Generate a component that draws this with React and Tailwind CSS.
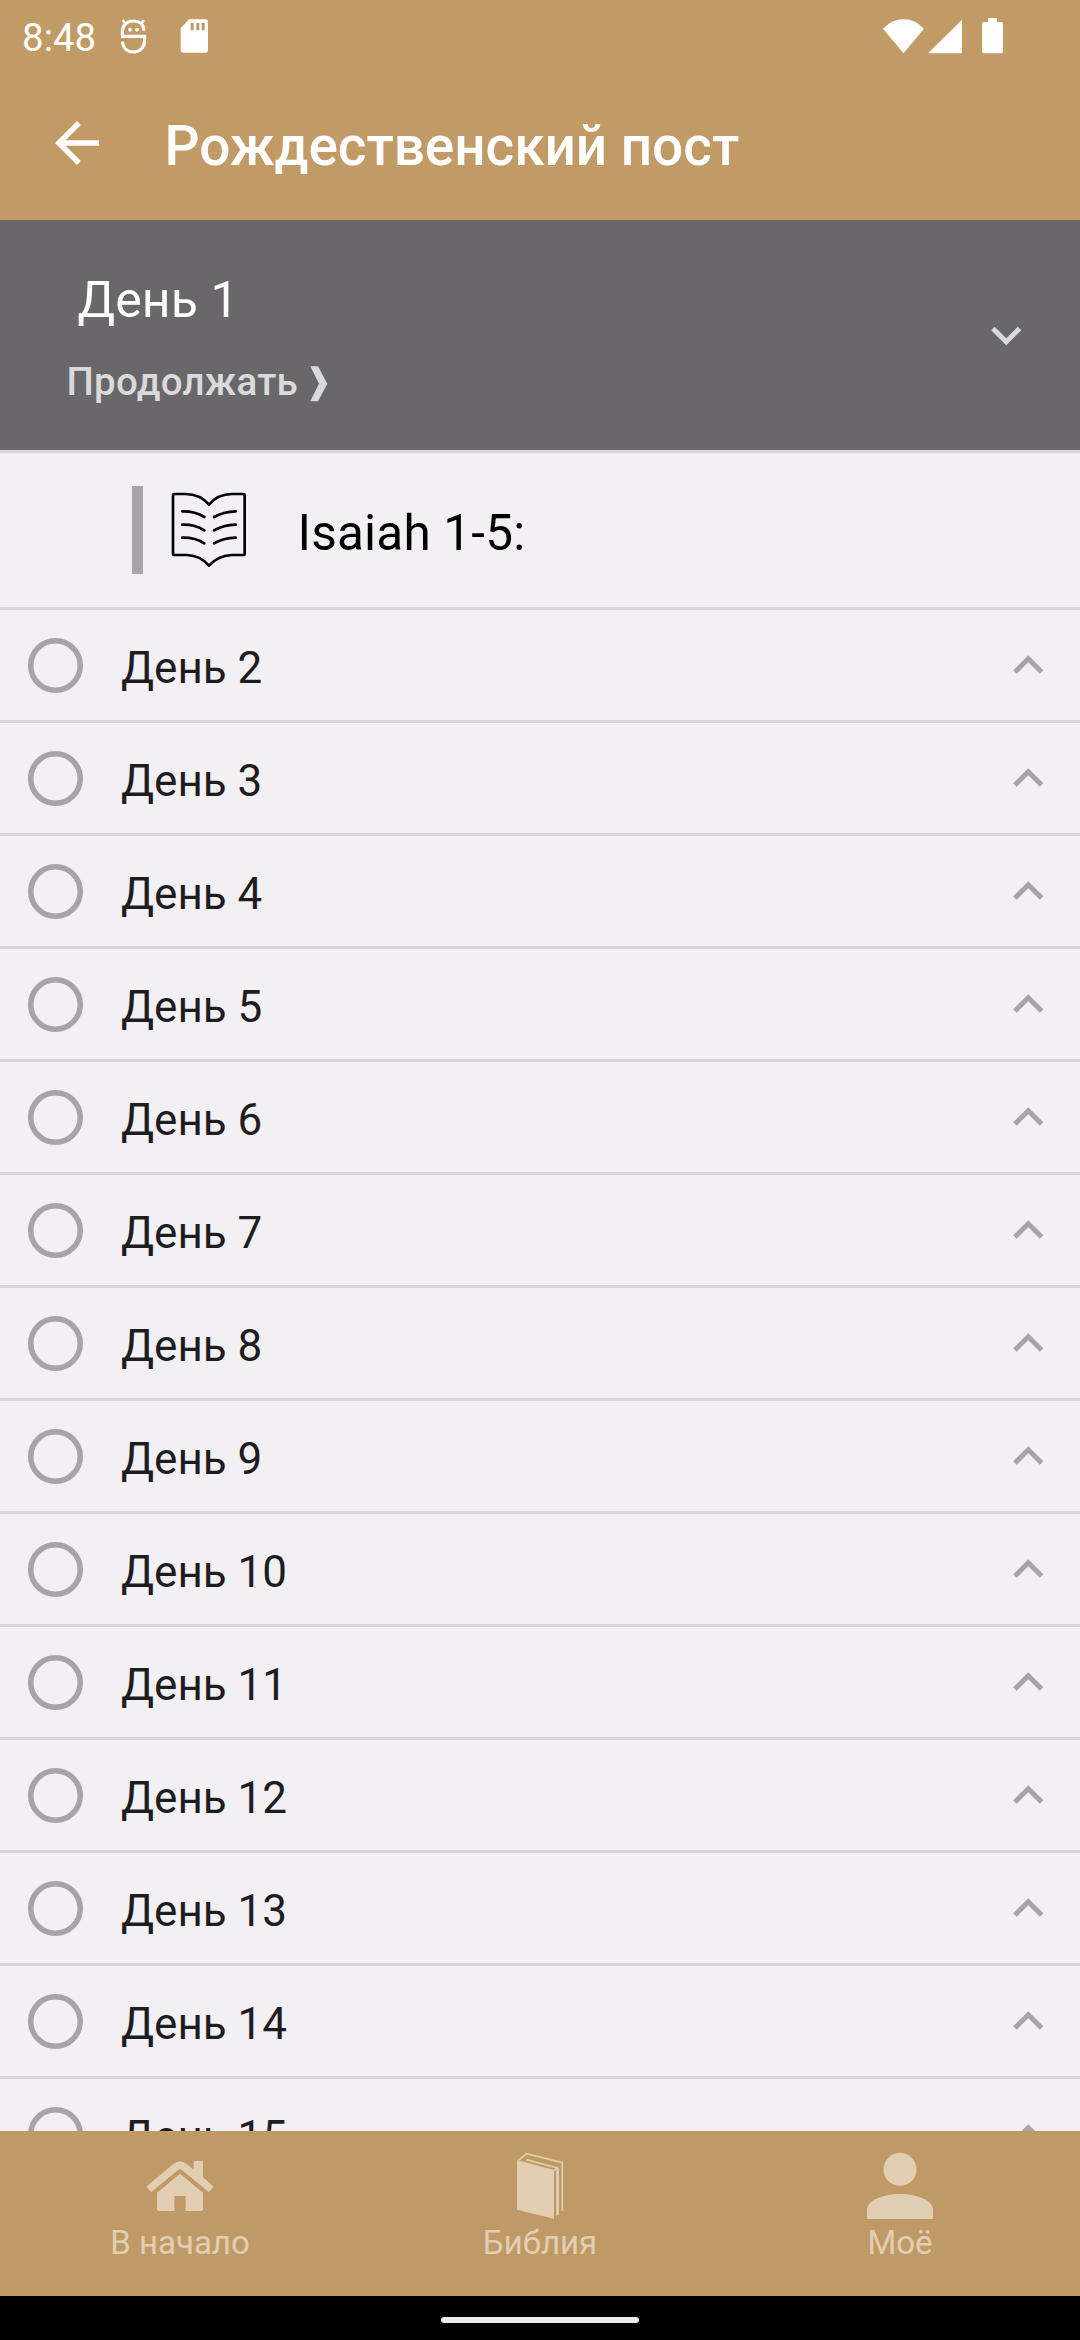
const days = [2, 3, 4, 5, 6, 7, 8, 9, 10, 11, 12, 13, 14, 15];

function StatusBar() {
  return (
    <div className="flex h-[72px] shrink-0 items-center pr-[77px] pl-[22px] text-white">
      <span className="mt-[3px] w-[98px] text-[38.500px] leading-[46px] whitespace-nowrap">8:48</span>
      <svg className="h-9 w-[27px]" viewBox="0 0 81 108" fill="none" stroke="currentColor">
        <path d="M7 55V39C9 21 22 9 40 9s31 10 32 29M3 55h71v11c0 22-14 36-34 36S9 88 7 71" strokeWidth="9.500" />
        <path d="M16 17 10 9M64 17l6-8" strokeWidth="8" strokeLinecap="round" />
        <circle cx="30" cy="35" r="5.500" fill="currentColor" stroke="none" />
        <circle cx="51" cy="35" r="5.500" fill="currentColor" stroke="none" />
      </svg>
      <svg className="ml-[33px] h-9 w-7" viewBox="0 0 84 108" fill="currentColor">
        <path fillRule="evenodd" d="M27 4h49q8 0 8 8v84q0 8-8 8H10q-8 0-8-8V31zM32 15v22h9V15zM49 15v22h9V15zM65 15v22h9V15z" />
      </svg>
      <div className="grow" />
      <svg className="h-9 w-[41px]" viewBox="0 0 123 108" fill="currentColor">
        <path d="M0 32Q27 4 61.500 4T123 32L61.500 106z" />
      </svg>
      <svg className="ml-1 h-9 w-[34px]" viewBox="0 0 102 108" fill="currentColor">
        <path d="M102 5v101H0z" />
      </svg>
      <svg className="ml-5 h-9 w-[21px]" viewBox="0 0 63 108" fill="currentColor">
        <path d="M18 0h27v12h12q6 0 6 6v82q0 6-6 6H6q-6 0-6-6V18q0-6 6-6h12z" />
      </svg>
    </div>
  );
}

function AppBar() {
  return (
    <div className="flex h-[148px] shrink-0 items-center text-white">
      <svg className="mb-[6px] ml-[44px] h-[66px] w-[66px]" viewBox="0 0 24 24" fill="currentColor">
        <path d="M20 11H7.830l5.590-5.590L12 4l-8 8 8 8 1.410-1.410L7.830 13H20z" />
      </svg>
      <h1 className="ml-[54.500px] text-[55px] leading-[64px] font-medium tracking-[-0.080px] whitespace-nowrap">Рождественский пост</h1>
    </div>
  );
}

function CurrentDay() {
  return (
    <section className="flex h-[233px] shrink-0 items-center border-b-[3px] border-[#d6d5d8] bg-[#696769] pr-[44px]">
      <div className="flex grow flex-col self-start pt-[51px]">
        <h2 className="ml-[77.500px] text-[50px] leading-[58px] tracking-[0.100px] text-white">День 1</h2>
        <div className="mt-[30px] ml-[66.500px] flex items-center text-[38.500px] leading-[46px] font-medium text-[#dad9db]">
          <span className="tracking-[0.250px]">Продолжать</span>
          <svg className="mt-[3px] ml-[12px] h-9 w-[18px]" viewBox="0 0 54 108" fill="currentColor">
            <path d="M1 1h23l28 52-28 53H1l26-53z" />
          </svg>
        </div>
      </div>
      <svg className="h-[60.500px] w-[60.500px] text-[#dad9db]" viewBox="0 0 24 24" fill="currentColor">
        <path d="M16.590 8.590 12 13.170 7.410 8.590 6 10l6 6 6-6z" />
      </svg>
    </section>
  );
}

function Reading() {
  return (
    <section className="flex h-[157px] shrink-0 items-center border-b-[3px] border-[#d6d5d8] pl-[132px] text-black">
      <div className="h-[88px] w-[11px] bg-[#a6a4a6]" />
      <svg className="ml-[27px] h-20 w-20" viewBox="210 150 240 240" fill="none" stroke="currentColor" strokeWidth="8" strokeLinecap="round" strokeLinejoin="round">
        <path d="M327 194Q300 162 257 162H223q-4 0-4 4V341q0 4 4 4h38Q302 347 327 377 354 347 394 345h36q4 0 4-4V166q0-4-4-4h-34Q353 162 327 194z" />
        <path d="M247 214q37-1 66 17M247 254q37-1 66 17M247 293q37-1 66 17M407 214q-37 1-65 17M407 254q-37 1-65 17M407 293q-37 1-65 17" />
      </svg>
      <span className="mt-[6px] ml-[47.500px] text-[49.500px] leading-[58px] tracking-[0.200px] whitespace-nowrap">Isaiah 1-5:</span>
    </section>
  );
}

function DayRow({ day }) {
  return (
    <li className="flex h-[113px] shrink-0 items-center border-b-[3px] border-[#d6d5d8] pr-[22px] pl-[27.500px]">
      <svg className="h-[55px] w-[55px] text-[#a6a4a6]" viewBox="0 0 55 55" fill="none" stroke="currentColor" strokeWidth="5.500">
        <circle cx="27.500" cy="27.500" r="24.750" />
      </svg>
      <span className="mt-[6px] ml-[38.500px] grow text-[44px] leading-[52px] text-[#1d1c1f]">День {day}</span>
      <svg className="h-[60.500px] w-[60.500px] text-[#a6a4a6]" viewBox="0 0 24 24" fill="currentColor">
        <path d="m12 8-6 6 1.410 1.410L12 10.830l4.590 4.580L18 14z" />
      </svg>
    </li>
  );
}

function NavItem({ label, viewBox, children }) {
  return (
    <div className="flex flex-col items-center pt-[19px]">
      <svg className="h-[72px] w-[72px]" viewBox={viewBox} fill="currentColor">{children}</svg>
      <span className="mt-[2px] text-[33px] leading-[38px]">{label}</span>
    </div>
  );
}

function BottomNav() {
  return (
    <nav className="grid h-[165px] shrink-0 grid-cols-3 bg-[#c09a66] text-[#e2ceb3]">
      <NavItem label="В начало" viewBox="252 270 216 216">
        <path d="M262 377 341 311q19-15 38 0l22 18V303h28v49l29 25q3 3 0 6l-9 11q-3 3-6 0L366 330q-6-5-12 0l-77 64q-3 3-6 0l-9-11q-3-3 0-6z" />
        <path d="M360 341 429 398v49q0 6-6 6H377V408H343v45H297q-6 0-6-6V398z" />
      </NavItem>
      <NavItem label="Библия" viewBox="252 150 216 216">
        <path d="M291 180 402 210V356L291 329z" />
        <path d="M294 182 320 161 427 188V333M402 212l10-8V345M412 204 319 179" fill="none" stroke="currentColor" strokeWidth="5" />
        <path d="M409 204h8V343l-8 4z" />
      </NavItem>
      <NavItem label="Моё" viewBox="192 270 216 216">
        <circle cx="300" cy="328" r="49.500" />
        <path d="M201 477V449C201 420 252 402 300 402s99 18 99 47v28z" />
      </NavItem>
    </nav>
  );
}

export default function App() {
  return (
    <div className="flex h-[2340px] w-[1080px] flex-col overflow-hidden bg-[#f2f0f3] font-['Roboto',sans-serif]">
      <header className="flex h-[220px] shrink-0 flex-col bg-[#c19a66]">
        <StatusBar />
        <AppBar />
      </header>
      <main className="flex h-[1911px] shrink-0 flex-col overflow-hidden">
        <CurrentDay />
        <Reading />
        <ul className="flex flex-col">
          {days.map((day) => (
            <DayRow key={day} day={day} />
          ))}
        </ul>
      </main>
      <BottomNav />
      <div className="flex h-[44px] shrink-0 items-center justify-center bg-black pt-[4px]">
        <div className="h-[6px] w-[198px] rounded-full bg-[#eeeeee]" />
      </div>
    </div>
  );
}
